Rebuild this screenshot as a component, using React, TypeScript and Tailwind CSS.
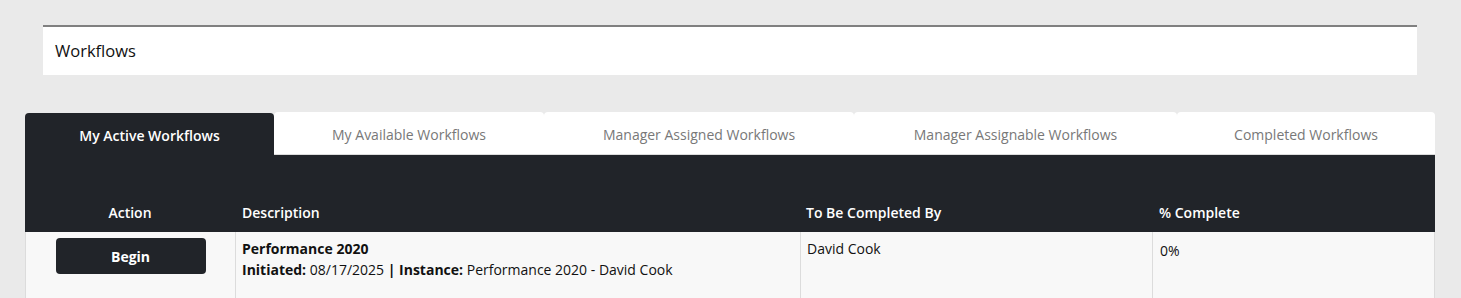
import React from 'react';

const tabs = [
  { label: 'My Active Workflows', width: 'w-[249px]', active: true },
  { label: 'My Available Workflows', width: 'w-[270px]', active: false },
  { label: 'Manager Assigned Workflows', width: 'w-[310px]', active: false },
  { label: 'Manager Assignable Workflows', width: 'w-[323px]', active: false },
  { label: 'Completed Workflows', width: 'w-[258px]', active: false },
];

const App: React.FC = () => {
  return (
    <div className="min-h-screen bg-[#eaeaea] pt-[25px] font-['Open_Sans',sans-serif] text-[#111]">
      <div className="ml-[43px] w-[1374px] h-[50px] border-t-2 border-[#808080] bg-white flex items-center px-3 text-[16.5px]">
        Workflows
      </div>

      <div className="ml-[25px] mt-[37px] w-[1410px]">
        <div className="flex h-[43px]">
          {tabs.map((t) =>
            t.active ? (
              <div
                key={t.label}
                className={`${t.width} mt-px pt-[2px] flex items-center justify-center rounded-t-[4px] bg-[#212429] text-[14px] font-semibold text-white`}
              >
                {t.label}
              </div>
            ) : (
              <div
                key={t.label}
                className={`${t.width} pt-[2px] flex items-center justify-center rounded-t-[4px] border-b border-[#dcdcdc] bg-white text-[14px] text-[#787878]`}
              >
                {t.label}
              </div>
            )
          )}
        </div>

        <div className="grid grid-cols-[210px_565px_352px_283px] bg-[#212429] h-[77px] items-end pb-[9px] text-[14px] font-semibold text-white">
          <div className="text-center">Action</div>
          <div className="pl-[7px]">Description</div>
          <div className="pl-[6px]">To Be Completed By</div>
          <div className="pl-[7px]">% Complete</div>
        </div>

        <div className="grid grid-cols-[210px_565px_352px_283px] h-[80px] bg-[#f8f8f8] border-x border-[#dcdcdc] text-[14px]">
          <div className="flex justify-center pt-[6px] border-r border-[#dcdcdc]">
            <button className="w-[150px] h-[36px] rounded-[4px] bg-[#212429] text-white font-bold text-[14px]">
              Begin
            </button>
          </div>
          <div className="pl-[6px] pt-[6px] border-r border-[#dcdcdc] leading-[21px]">
            <div className="font-bold">Performance 2020</div>
            <div>
              <span className="font-bold">Initiated:</span> 08/17/2025 <span className="font-bold">| Instance:</span>{' '}
              Performance 2020 - David Cook
            </div>
          </div>
          <div className="pl-[6px] pt-[6px] border-r border-[#dcdcdc] leading-[21px]">David Cook</div>
          <div className="pl-[7px] pt-[8px] leading-[21px]">0%</div>
        </div>
      </div>
    </div>
  );
};

export default App;
